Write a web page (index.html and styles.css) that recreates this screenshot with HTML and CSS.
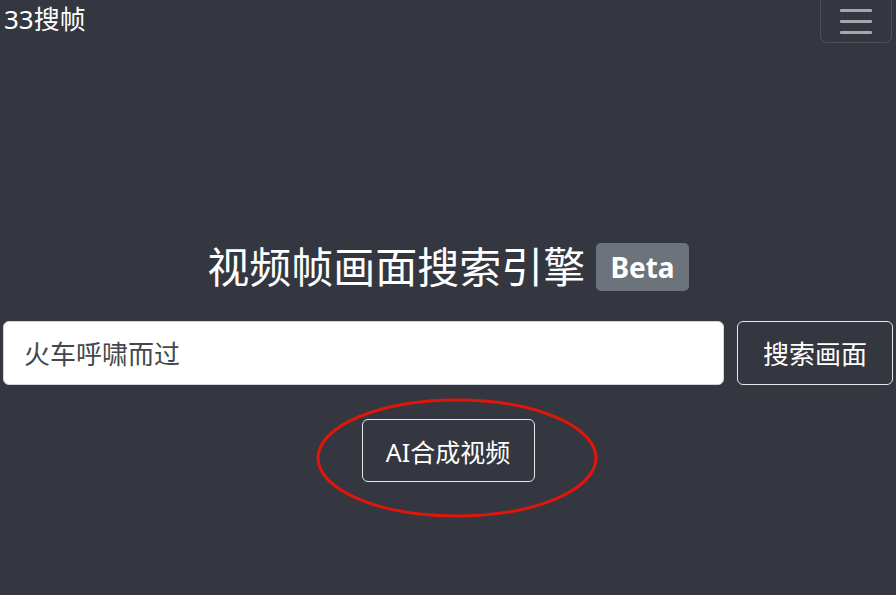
FILE: index.html
```html
<!DOCTYPE html>
<html lang="zh">
<head>
<meta charset="utf-8">
<title>33搜帧</title>
<link rel="stylesheet" href="styles.css">
</head>
<body>
<nav class="navbar">
  <span class="brand">33搜帧</span>
  <button class="toggler" aria-label="menu">
    <span class="bar"></span><span class="bar"></span><span class="bar"></span>
  </button>
</nav>
<main class="main">
  <h1 class="title">视频帧画面搜索引擎 <span class="badge">Beta</span></h1>
  <div class="search">
    <input class="input" type="text" value="火车呼啸而过">
    <button class="btn">搜索画面</button>
  </div>
  <div class="ai-wrap">
    <button class="btn ai">AI合成视频</button>
    <svg class="circle" width="284" height="122" viewBox="0 0 284 122"><ellipse cx="142" cy="61" rx="139" ry="58" fill="none" stroke="#e0160b" stroke-width="3"/></svg>
  </div>
</main>
</body>
</html>
```
FILE: styles.css
```css
html, body {
  margin: 0;
  height: 100%;
}
body {
  background: #34373f;
  color: #fff;
  font-family: "Noto Sans", "Noto Sans CJK SC", sans-serif;
  overflow: hidden;
}
.navbar {
  display: flex;
  justify-content: space-between;
  align-items: flex-start;
  padding: 0 4px 0 4px;
}
.brand {
  font-size: 26px;
  line-height: 38px;
  color: #fff;
}
.toggler {
  margin-top: -10px;
  width: 72px;
  height: 53px;
  background: transparent;
  border: 1.5px solid rgba(255,255,255,0.12);
  border-radius: 7px;
  display: flex;
  flex-direction: column;
  align-items: center;
  justify-content: center;
  gap: 8px;
  padding: 0;
  padding-top: 10px;
}
.bar {
  display: block;
  width: 32px;
  height: 3px;
  background: #a4a7ac;
  border-radius: 1px;
}
.main {
  display: flex;
  flex-direction: column;
  align-items: center;
  padding-top: 193px;
}
.title {
  margin: 0;
  font-weight: 400;
  font-size: 42px;
  line-height: 62px;
  display: flex;
  align-items: center;
  gap: 11px;
}
.badge {
  font-size: 28px;
  font-weight: 700;
  background: #6c737a;
  color: #fff;
  border-radius: 5px;
  padding: 0 14px;
  height: 48px;
  line-height: 48px;
  display: inline-block;
}
.search {
  display: flex;
  gap: 13px;
  width: 896px;
  margin-top: 23px;
  box-sizing: border-box;
  padding: 0 3px;
}
.input {
  flex: 1;
  min-width: 0;
  height: 64px;
  box-sizing: border-box;
  border: 1px solid #ced4da;
  border-radius: 6px;
  padding: 0 20px;
  font-family: "Noto Sans", "Noto Sans CJK SC", sans-serif;
  font-size: 26px;
  font-weight: 400;
  color: #44484d;
  background: #fff;
}
.btn {
  height: 64px;
  box-sizing: border-box;
  background: transparent;
  border: 1.5px solid #e6e7e9;
  border-radius: 6px;
  color: #fff;
  font-family: "Noto Sans", "Noto Sans CJK SC", sans-serif;
  font-size: 26px;
  padding: 0;
  width: 156px;
}
.ai-wrap {
  position: relative;
  margin-top: 34px;
}
.ai {
  width: 173px;
  height: 63px;
  font-size: 25px;
}
.circle {
  position: absolute;
  left: -47px;
  top: -22px;
  pointer-events: none;
}
```
